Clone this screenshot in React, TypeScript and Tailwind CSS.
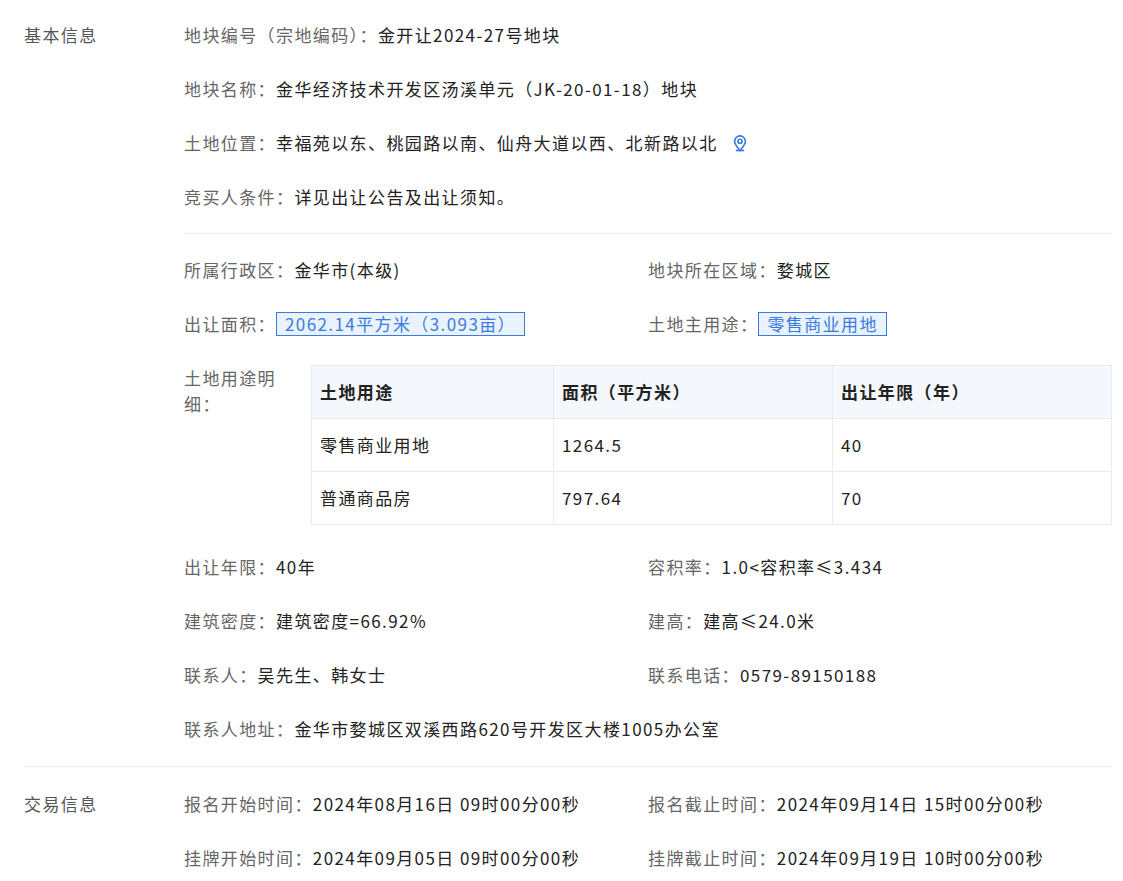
const font = { fontFamily: '"Noto Sans CJK SC", "Noto Sans", sans-serif', letterSpacing: "1.4px" };

const Field = ({ label, children }: { label: string; children: React.ReactNode }) => (
  <div className="flex h-[54px] items-center whitespace-nowrap">
    <span className="text-[#666]">{label}：</span>
    <span className="text-[#222]">{children}</span>
  </div>
);

const Pair = ({ a, b }: { a: React.ReactNode; b: React.ReactNode }) => (
  <div className="grid grid-cols-[464px_1fr]">
    {a}
    {b}
  </div>
);

const Tag = ({ children }: { children: React.ReactNode }) => (
  <span className="inline-block border border-[#3a7be0] bg-[#eaf2fd] px-2 leading-[22px] text-[#3a7be0]">
    {children}
  </span>
);

const PinIcon = () => (
  <svg width="20" height="20" viewBox="0 0 24 24" fill="none" stroke="#3a7be0" strokeWidth="2" className="ml-3">
    <path d="M12 21c-4-4.5-6.5-7.8-6.5-11a6.5 6.5 0 0 1 13 0c0 3.2-2.5 6.5-6.5 11z" />
    <circle cx="12" cy="10" r="2.5" />
    <path d="M7 21h10" />
  </svg>
);

export default function App() {
  const rows = [
    ["零售商业用地", "1264.5", "40"],
    ["普通商品房", "797.64", "70"],
  ];
  return (
    <div className="min-h-screen bg-white pt-2 text-[17px]" style={font}>
      <div className="flex">
        <div className="w-[184px] shrink-0 pl-6 leading-[54px] text-[#555]">基本信息</div>
        <div className="w-[928px]">
          <Field label="地块编号（宗地编码）">金开让2024-27号地块</Field>
          <Field label="地块名称">金华经济技术开发区汤溪单元（JK-20-01-18）地块</Field>
          <div className="flex h-[54px] items-center whitespace-nowrap">
            <span className="text-[#666]">土地位置：</span>
            <span className="text-[#222]">幸福苑以东、桃园路以南、仙舟大道以西、北新路以北</span>
            <PinIcon />
          </div>
          <Field label="竞买人条件">详见出让公告及出让须知。</Field>
          <div className="my-[9px] border-t border-[#ececec]" />
          <Pair a={<Field label="所属行政区">金华市(本级)</Field>} b={<Field label="地块所在区域">婺城区</Field>} />
          <Pair
            a={<Field label="出让面积"><Tag>2062.14平方米（3.093亩）</Tag></Field>}
            b={<Field label="土地主用途"><Tag>零售商业用地</Tag></Field>}
          />
          <div className="flex pt-[14px]">
            <span className="w-[127px] shrink-0 pt-0 text-[#666]">土地用途明细：</span>
            <table className="w-[801px] border-collapse text-[#222]">
              <thead>
                <tr className="h-[53px] bg-[#f4f8fd] text-left font-bold">
                  <th className="w-[242px] border border-[#e8ecf0] px-2">土地用途</th>
                  <th className="w-[279px] border border-[#e8ecf0] px-2">面积（平方米）</th>
                  <th className="border border-[#e8ecf0] px-2">出让年限（年）</th>
                </tr>
              </thead>
              <tbody>
                {rows.map((r) => (
                  <tr key={r[0]} className="h-[53px]">
                    {r.map((c, i) => (
                      <td key={i} className="border border-[#e8ecf0] px-2">{c}</td>
                    ))}
                  </tr>
                ))}
              </tbody>
            </table>
          </div>
          <div className="h-[15px]" />
          <Pair a={<Field label="出让年限">40年</Field>} b={<Field label="容积率">1.0&lt;容积率≤3.434</Field>} />
          <Pair a={<Field label="建筑密度">建筑密度=66.92%</Field>} b={<Field label="建高">建高≤24.0米</Field>} />
          <Pair a={<Field label="联系人">吴先生、韩女士</Field>} b={<Field label="联系电话">0579-89150188</Field>} />
          <Field label="联系人地址">金华市婺城区双溪西路620号开发区大楼1005办公室</Field>
        </div>
      </div>
      <div className="mx-6 my-[10px] w-[1088px] border-t border-[#ececec]" />
      <div className="flex">
        <div className="w-[184px] shrink-0 pl-6 leading-[54px] text-[#555]">交易信息</div>
        <div className="w-[928px]">
          <Pair
            a={<Field label="报名开始时间">2024年08月16日 09时00分00秒</Field>}
            b={<Field label="报名截止时间">2024年09月14日 15时00分00秒</Field>}
          />
          <Pair
            a={<Field label="挂牌开始时间">2024年09月05日 09时00分00秒</Field>}
            b={<Field label="挂牌截止时间">2024年09月19日 10时00分00秒</Field>}
          />
        </div>
      </div>
    </div>
  );
}
